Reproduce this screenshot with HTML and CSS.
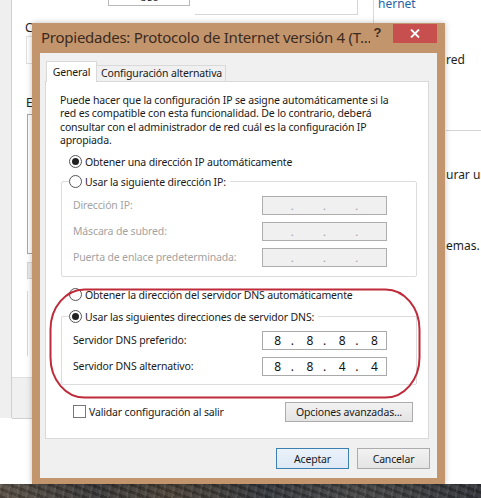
FILE: index.html
```html
<!DOCTYPE html>
<html lang="es">
<head>
<meta charset="utf-8">
<title>Propiedades: Protocolo de Internet versión 4 (TCP/IPv4)</title>
<link rel="stylesheet" href="styles.css">
</head>
<body>
<div class="desktop">
  <div class="bgwin">
    <div class="bg-left"></div>
    <div class="bg-main">
      <div class="bg-top">
        <div class="bg-tab"><span>Uso compartido</span></div>
        <div class="bg-strip"></div>
      </div>
      <div class="bg-label bg-l1">Conectar con:</div>
      <div class="bg-box bg-b1"></div>
      <div class="bg-label bg-l2">Esta conexión usa los siguientes elementos:</div>
      <div class="bg-box bg-list"></div>
      <div class="bg-btn"></div>
      <div class="bg-desc"></div>
      <div class="bg-footer"></div>
    </div>
    <div class="bg-right">
      <div class="bg-link">hernet</div>
      <div class="bg-txt bg-t1">red</div>
      <div class="bg-rule"></div>
      <div class="bg-txt bg-t2">urar ur</div>
      <div class="bg-txt bg-t3">emas.</div>
    </div>
  </div>
  <div class="rock"></div>

  <div class="dialog">
    <div class="titlebar">
      <div class="title">Propiedades: Protocolo de Internet versión 4 (T...</div>
      <div class="help">?</div>
      <div class="close">
        <svg width="10" height="9" viewBox="0 0 10 9"><path d="M1 0.5L9 8.5M9 0.5L1 8.5" stroke="#fff" stroke-width="1.8" fill="none"/></svg>
      </div>
    </div>
    <div class="client">
      <div class="tabs">
        <div class="tab active">General</div>
        <div class="tab">Configuración alternativa</div>
      </div>
      <div class="panel">
        <p class="desc">Puede hacer que la configuración IP se asigne automáticamente si la<br>red es compatible con esta funcionalidad. De lo contrario, deberá<br>consultar con el administrador de red cuál es la configuración IP<br>apropiada.</p>

        <div class="radio-row r-ip-auto"><span class="radio on"></span>Obtener una dirección IP automáticamente</div>

        <fieldset class="group g-ip">
          <legend class="radio-row"><span class="radio"></span>Usar la siguiente dirección IP:</legend>
          <div class="field disabled"><span class="flabel">Dirección IP:</span><span class="ipbox"><span class="seg"></span><span class="dot">.</span><span class="seg"></span><span class="dot">.</span><span class="seg"></span><span class="dot">.</span><span class="seg"></span></span></div>
          <div class="field disabled"><span class="flabel">Máscara de subred:</span><span class="ipbox"><span class="seg"></span><span class="dot">.</span><span class="seg"></span><span class="dot">.</span><span class="seg"></span><span class="dot">.</span><span class="seg"></span></span></div>
          <div class="field disabled"><span class="flabel">Puerta de enlace predeterminada:</span><span class="ipbox"><span class="seg"></span><span class="dot">.</span><span class="seg"></span><span class="dot">.</span><span class="seg"></span><span class="dot">.</span><span class="seg"></span></span></div>
        </fieldset>

        <div class="radio-row r-dns-auto"><span class="radio"></span>Obtener la dirección del servidor DNS automáticamente</div>

        <fieldset class="group g-dns">
          <legend class="radio-row"><span class="radio on"></span>Usar las siguientes direcciones de servidor DNS:</legend>
          <div class="field"><span class="flabel">Servidor DNS preferido:</span><span class="ipbox"><span class="seg">8</span><span class="dot">.</span><span class="seg">8</span><span class="dot">.</span><span class="seg">8</span><span class="dot">.</span><span class="seg">8</span></span></div>
          <div class="field"><span class="flabel">Servidor DNS alternativo:</span><span class="ipbox"><span class="seg">8</span><span class="dot">.</span><span class="seg">8</span><span class="dot">.</span><span class="seg">4</span><span class="dot">.</span><span class="seg">4</span></span></div>
        </fieldset>

        <div class="bottom-row">
          <label class="check"><span class="checkbox"></span>Validar configuración al salir</label>
          <button class="btn adv">Opciones avanzadas...</button>
        </div>

        <svg class="mark" width="372" height="111" viewBox="0 0 372 111"><rect x="1.5" y="1.5" width="369" height="108" rx="34" ry="40" fill="none" stroke="#bf2b3a" stroke-width="2"/></svg>
      </div>
      <div class="actions">
        <button class="btn default">Aceptar</button>
        <button class="btn">Cancelar</button>
      </div>
    </div>
  </div>
</div>
</body>
</html>
```

FILE: styles.css
```css
* { box-sizing: border-box; }
html, body { margin: 0; padding: 0; }
body {
  font-family: "Noto Sans", "Open Sans", sans-serif;
  font-size: 10.5px;
  letter-spacing: -0.15px;
  color: #1a1a1a;
  background: #fff;
}
.desktop {
  position: relative;
  width: 481px;
  height: 498px;
  overflow: hidden;
  display: grid;
  grid-template-rows: 484px 14px;
}

/* ---------- background window ---------- */
.bgwin {
  display: grid;
  grid-template-columns: 12px 361px 108px;
  background: #fff;
}
.bg-left {
  background: #efefef;
  border-right: 1px solid #cfcfcf;
  height: 418px;
}
.bg-main {
  display: flex;
  flex-direction: column;
  padding-left: 14px;
}
.bg-top {
  display: flex;
  align-items: flex-start;
  height: 21px;
  margin-left: -14px;
}
.bg-tab {
  margin-left: 96px;
  width: 82px;
  height: 6px;
  border: 1px solid #b9b9b9;
  border-top: none;
  background: #fff;
  font-size: 11px;
  overflow: hidden;
  text-align: center;
  color: #222;
}
.bg-tab span {
  display: block;
  line-height: 12px;
  margin-top: -9px;
}
.bg-strip {
  margin-left: 5px;
  width: 163px;
  height: 15px;
  border-right: 1px solid #d6d6d6;
  border-bottom: 1px solid #d6d6d6;
}
.bg-label { font-size: 12px; line-height: 14px; white-space: nowrap; color: #222; letter-spacing: 0; }
.bg-l1 { margin-left: -1px; }
.bg-b1 { margin-top: 1px; height: 28px; width: 300px; border: 1px solid #e0e0e0; }
.bg-l2 { margin-top: 32px; }
.bg-list { margin-top: 4px; height: 140px; width: 300px; border: 1px solid #a7a7a7; margin-left: 1px; }
.bg-btn { margin-top: 8px; height: 17px; width: 80px; border: 1px solid #d4d4d4; background: #ececec; margin-left: 1px; }
.bg-desc { margin-top: 12px; height: 65px; width: 300px; border-left: 1px solid #d8d8d8; margin-left: 1px; }
.bg-footer {
  margin-top: 21px;
  margin-left: -14px;
  height: 42px;
  background: #f0f0f0;
  border-top: 1px solid #dedede;
  border-bottom: 1px solid #d0d0d0;
}
.bg-right {
  border-left: 1px solid #d9d9d9;
  display: flex;
  flex-direction: column;
  font-size: 12px;
  line-height: 14px;
  letter-spacing: 0;
  color: #1e1e1e;
  white-space: nowrap;
  overflow: hidden;
}
.bg-link { color: #1d63a6; margin-top: -3px; padding-left: 4px; }
.bg-txt { padding-left: 72px; }
.bg-t1 { margin-top: 42px; }
.bg-rule { margin-top: 63px; margin-left: 72px; border-top: 1px solid #d4d4d4; }
.bg-t2 { margin-top: 37px; }
.bg-t3 { margin-top: 57px; }

.rock {
  background:
    repeating-linear-gradient(100deg, rgba(255,255,255,0.06) 0 2px, rgba(0,0,0,0.1) 2px 5px, rgba(255,255,255,0) 5px 9px),
    repeating-linear-gradient(20deg, rgba(0,0,0,0.15) 0 3px, rgba(255,255,255,0.05) 3px 7px),
    linear-gradient(90deg, #5a5046 0%, #3b3a3a 20%, #4c4238 35%, #35383d 55%, #464646 75%, #303338 100%);
}

/* ---------- dialog ---------- */
.dialog {
  position: absolute;
  left: 32px;
  top: 23px;
  width: 413px;
  height: 461px;
  background: #c3956d;
  padding: 0 8px 6px 8px;
  display: flex;
  flex-direction: column;
  box-shadow: 0 0 6px rgba(0,0,0,0.25);
}
.titlebar {
  height: 30px;
  display: flex;
  align-items: flex-start;
  flex-shrink: 0;
}
.title {
  font-size: 15px;
  line-height: 20px;
  padding-top: 4px;
  margin-left: 1px;
  letter-spacing: -0.25px;
  color: #3b2a1e;
  white-space: nowrap;
  flex: 1;
  overflow: hidden;
}
.help {
  width: 15px;
  margin-top: 3px;
  font-family: "Liberation Sans", sans-serif;
  font-weight: bold;
  font-size: 13px;
  line-height: 14px;
  color: #3b2a1e;
  text-align: center;
  margin-right: 8px;
}
.close {
  width: 44px;
  height: 19px;
  margin-top: 1px;
  background: #c7504f;
  display: flex;
  align-items: center;
  justify-content: center;
}
.client {
  flex: 1;
  background: #f0f0f0;
  padding: 9px 8px 9px 5px;
  display: flex;
  flex-direction: column;
}
.tabs {
  display: flex;
  align-items: flex-end;
  height: 19px;
  margin-left: 1px;
  position: relative;
  z-index: 1;
}
.tab {
  height: 16px;
  padding: 0 4px;
  border: 1px solid #d9d9d9;
  border-left: none;
  border-bottom: none;
  background: #f0f0f0;
  line-height: 15px;
  white-space: nowrap;
  width: 129px;
  text-align: center;
}
.tab.active {
  height: 21px;
  width: 51px;
  margin-bottom: -1px;
  border-left: 1px solid #d9d9d9;
  background: #fff;
  line-height: 19px;
  padding-top: 1px;
}
.panel {
  position: relative;
  height: 358px;
  background: #fff;
  border: 1px solid #d9d9d9;
  padding: 12px 15px 0 14px;
  display: flex;
  flex-direction: column;
}
.desc {
  margin: 0;
  line-height: 13.4px;
  white-space: nowrap;
}
.radio-row {
  display: flex;
  align-items: center;
  height: 16px;
  white-space: nowrap;
}
.radio {
  width: 13px;
  height: 13px;
  border: 1px solid #555;
  border-radius: 50%;
  background: #fff;
  margin-right: 3px;
  flex-shrink: 0;
  display: flex;
  align-items: center;
  justify-content: center;
}
.radio.on::after {
  content: "";
  width: 7px;
  height: 7px;
  border-radius: 50%;
  background: #222;
}
.r-ip-auto { margin-top: 6px; padding-left: 9px; }
.group {
  margin: 4px 0 0 1px;
  width: 356px;
  border: 1px solid #dcdcdc;
  border-radius: 2px;
  padding: 6px 29px 0 11px;
  min-width: 0;
}
.group legend {
  padding: 0 4px 0 0;
  margin-left: -4px;
}
.field {
  display: flex;
  align-items: center;
  justify-content: space-between;
  height: 19px;
  margin-bottom: 7px;
}
.field .flabel { white-space: nowrap; }
.field.disabled .flabel { color: #a3a3a3; }
.ipbox {
  width: 125px;
  height: 19px;
  border: 1px solid #a9a9a9;
  background: #fff;
  display: grid;
  grid-template-columns: 1fr auto 1fr auto 1fr auto 1fr;
  align-items: center;
  font-size: 12px;
  line-height: 17px;
  letter-spacing: 0;
  color: #111;
}
.field.disabled .ipbox {
  background: #f0f0f0;
  border-color: #adadad;
  color: #9a9a9a;
}
.seg { text-align: center; padding-left: 3px; }
.dot { width: 6px; text-align: center; }
.field.disabled .dot { font-size: 11px; }
.g-ip { padding-bottom: 2px; }
.r-dns-auto { margin-top: 10px; padding-left: 9px; }
.g-dns { margin-top: 6px; padding-bottom: 1px; }
.bottom-row {
  display: flex;
  align-items: center;
  justify-content: space-between;
  margin-top: 17px;
  height: 20px;
  padding-left: 13px;
}
.check { display: flex; align-items: center; white-space: nowrap; }
.checkbox {
  width: 13px;
  height: 13px;
  border: 1px solid #777;
  background: #fff;
  margin-right: 3px;
}
.btn {
  font-family: "Noto Sans", sans-serif;
  font-size: 10.5px;
  letter-spacing: -0.15px;
  color: #1a1a1a;
  height: 20px;
  padding: 0;
  border: 1px solid #acacac;
  background: linear-gradient(#f2f2f2, #e4e4e4);
  border-radius: 0;
}
.adv { width: 128px; }
.mark {
  position: absolute;
  left: 3px;
  top: 206px;
  pointer-events: none;
}
.actions {
  display: flex;
  justify-content: flex-end;
  gap: 8px;
  margin-top: 9px;
  margin-right: -1px;
}
.actions .btn { width: 73px; height: 21px; }
.btn.default {
  border-color: #3c7fb1;
  background: linear-gradient(#eaf2fa, #dde9f5);
}
```
